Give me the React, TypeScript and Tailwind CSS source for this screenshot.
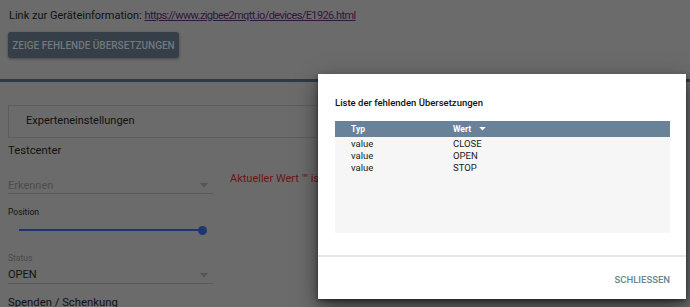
import React from "react";

const Caret = ({ w = 8, h = 5 }: { w?: number; h?: number }) => (
  <svg width={w} height={h} viewBox="0 0 8 5" className="shrink-0">
    <path d="M0 0 L8 0 L4 4.5 Z" fill="currentColor" />
  </svg>
);

export default function App() {
  return (
    <div className="relative w-[690px] h-[307px] overflow-hidden bg-[#6b6b6b] font-[Roboto,sans-serif] text-[#111]">
      {/* page under backdrop */}
      <div className="flex flex-col">
        <div className="pt-[7px] pl-[9px] h-[25px] text-[11px] leading-[18px] whitespace-nowrap">
          Link zur Geräteinformation:{" "}
          <span className="underline text-[#2e1838] tracking-[-0.6px]">https://www.zigbee2mqtt.io/devices/E1926.html</span>
        </div>
        <div className="pl-[8px] pt-[7px]">
          <div className="w-[171px] h-[26px] rounded-[3px] bg-[#363f48] shadow-[0_1px_3px_rgba(0,0,0,0.35)] flex items-center justify-center whitespace-nowrap text-[10px] font-medium text-[#72787e]">
            ZEIGE FEHLENDE ÜBERSETZUNGEN
          </div>
        </div>
        <div className="mt-[21px] h-[3px] bg-[#2e3a44]" />
        <div className="mt-[23px] mx-[8px] h-[33px] border border-[#5e5e5e] flex items-center pl-[17px] text-[11px]">
          Experteneinstellungen
        </div>
        <div className="mt-[4px] pl-[8px] h-[18px] text-[11.3px] leading-[18px]">Testcenter</div>
        <div className="flex">
          <div className="w-[213px] pl-[8px] flex flex-col">
            <div className="mt-[18px] h-[16px] border-b border-[#5a5a5a] flex items-center justify-between pr-[5px] text-[11px] leading-[16px] text-[#4d4d4d]">
              <span>Erkennen</span>
              <span className="text-[#555]"><Caret /></span>
            </div>
            <div className="mt-[12px] h-[12px] text-[8.5px] leading-[12px]">Position</div>
            <div className="mt-[6px] h-[12px] relative flex items-center pl-[11px] pr-[10px]">
              <div className="h-[2px] w-full bg-[#1f3570]" />
              <div className="absolute right-[6px] w-[9px] h-[9px] rounded-full bg-[#1f3570]" />
            </div>
            <div className="mt-[17px] h-[10px] text-[8.5px] leading-[10px] text-[#4a4a4a]">Status</div>
            <div className="mt-[5px] h-[16px] border-b border-[#5a5a5a] flex items-center justify-between pr-[5px] text-[11px] leading-[16px]">
              <span className="-mt-[1px]">OPEN</span>
              <span className="text-[#555] -mt-[1px]"><Caret /></span>
            </div>
            <div className="mt-[10px] h-[18px] text-[11.3px] leading-[18px] whitespace-nowrap">Spenden / Schenkung</div>
          </div>
          <div className="pl-[17px] pt-[10px] text-[11px] leading-[18px] text-[#6c1616] whitespace-nowrap">
            Aktueller Wert "" ist
          </div>
        </div>
      </div>

      {/* dialog */}
      <div className="absolute left-[318px] top-[74px] w-[368px] h-[225px] bg-white shadow-[0_8px_20px_rgba(0,0,0,0.55),0_2px_4px_rgba(0,0,0,0.4)] flex flex-col">
        <div className="px-[17px] pt-[22px]">
          <div className="h-[14px] text-[9.5px] leading-[14px] font-medium text-[#111] whitespace-nowrap">
            Liste der fehlenden Übersetzungen
          </div>
          <div className="mt-[11px] w-[335px]">
            <div className="h-[16px] bg-[#6a8299] flex items-center text-[8.5px] font-bold text-white">
              <span className="pl-[16px] w-[118px]">Typ</span>
              <span className="flex items-center gap-[8px]">
                Wert <Caret w={7} h={4} />
              </span>
            </div>
            <div className="h-[96px] bg-[#f6f6f6] pt-[1px] text-[9.5px] leading-[12px] text-[#1a1a1a]">
              {["CLOSE", "OPEN", "STOP"].map((v) => (
                <div key={v} className="flex">
                  <span className="pl-[16px] w-[118px]">value</span>
                  <span>{v}</span>
                </div>
              ))}
            </div>
          </div>
        </div>
        <div className="mt-[22px] h-[2px] bg-[#e6e6e6]" />
        <div className="flex-1 flex items-center justify-end pr-[16px] pt-[5px]">
          <span className="text-[9.5px] font-medium text-[#6a8299]">SCHLIESSEN</span>
        </div>
      </div>
    </div>
  );
}
